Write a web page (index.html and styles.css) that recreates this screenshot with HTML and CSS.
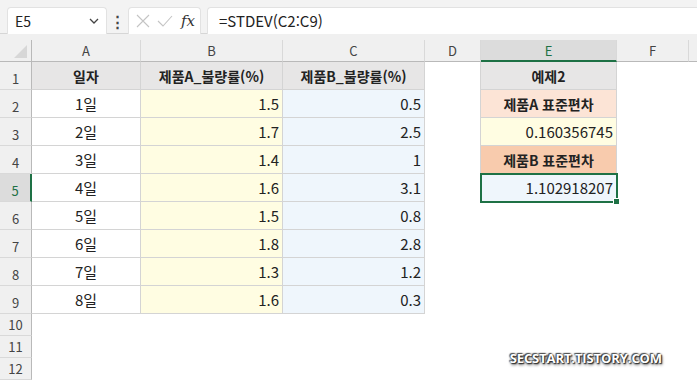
FILE: index.html
```html
<!DOCTYPE html>
<html lang="ko">
<head>
    <meta charset="UTF-8">
    <title>STDEV 예제</title>
    <link rel="stylesheet" href="styles.css">
</head>
<body>

    <!-- 이름 상자 + 수식 입력줄 -->
    <div class="toolbar">
        <div class="name-box">
            <span>E5</span>
            <svg width="10" height="6" viewBox="0 0 10 6"><path d="M1 1 L5 5 L9 1" fill="none" stroke="#444" stroke-width="1.3"/></svg>
        </div>
        <div class="dots">⋮</div>
        <div class="fx-box">
            <svg width="14" height="14" viewBox="0 0 14 14"><path d="M1 1 L13 13 M13 1 L1 13" stroke="#c4c4c4" stroke-width="1.1"/></svg>
            <svg width="16" height="14" viewBox="0 0 16 14"><path d="M1 7 L6 12 L15 2" fill="none" stroke="#c4c4c4" stroke-width="1.1"/></svg>
            <span class="fx">fx</span>
        </div>
        <div class="formula">=STDEV(C2:C9)</div>
    </div>

    <!-- 시트 -->
    <div class="sheet">
        <div class="corner"><svg width="13" height="13" viewBox="0 0 13 13"><path d="M13 0 L13 13 L0 13 Z" fill="#d7d7d7"/></svg></div>
        <div class="ch">A</div>
        <div class="ch">B</div>
        <div class="ch">C</div>
        <div class="ch">D</div>
        <div class="ch sel">E</div>
        <div class="ch">F</div>
        <div class="ch last"></div>

        <div class="rh">1</div>
        <div class="c t head">일자</div>
        <div class="c t head">제품A_불량률(%)</div>
        <div class="c t head">제품B_불량률(%)</div>
        <div class="c"></div>
        <div class="c e head">예제2</div>
        <div class="c"></div><div class="c"></div>

        <div class="rh">2</div>
        <div class="c t mid">1일</div>
        <div class="c t ya num">1.5</div>
        <div class="c t bl num">0.5</div>
        <div class="c"></div>
        <div class="c e peach mid bold">제품A 표준편차</div>
        <div class="c"></div><div class="c"></div>

        <div class="rh">3</div>
        <div class="c t mid">2일</div>
        <div class="c t ya num">1.7</div>
        <div class="c t bl num">2.5</div>
        <div class="c"></div>
        <div class="c e ya num">0.160356745</div>
        <div class="c"></div><div class="c"></div>

        <div class="rh">4</div>
        <div class="c t mid">3일</div>
        <div class="c t ya num">1.4</div>
        <div class="c t bl num">1</div>
        <div class="c"></div>
        <div class="c e orange mid bold">제품B 표준편차</div>
        <div class="c"></div><div class="c"></div>

        <div class="rh sel">5</div>
        <div class="c t mid">4일</div>
        <div class="c t ya num">1.6</div>
        <div class="c t bl num">3.1</div>
        <div class="c"></div>
        <div class="c e bl num active">1.102918207</div>
        <div class="c"></div><div class="c"></div>

        <div class="rh">6</div>
        <div class="c t mid">5일</div>
        <div class="c t ya num">1.5</div>
        <div class="c t bl num">0.8</div>
        <div class="c"></div><div class="c"></div><div class="c"></div><div class="c"></div>

        <div class="rh">7</div>
        <div class="c t mid">6일</div>
        <div class="c t ya num">1.8</div>
        <div class="c t bl num">2.8</div>
        <div class="c"></div><div class="c"></div><div class="c"></div><div class="c"></div>

        <div class="rh">8</div>
        <div class="c t mid">7일</div>
        <div class="c t ya num">1.3</div>
        <div class="c t bl num">1.2</div>
        <div class="c"></div><div class="c"></div><div class="c"></div><div class="c"></div>

        <div class="rh">9</div>
        <div class="c t mid">8일</div>
        <div class="c t ya num">1.6</div>
        <div class="c t bl num">0.3</div>
        <div class="c"></div><div class="c"></div><div class="c"></div><div class="c"></div>

        <div class="rh">10</div>
        <div class="c"></div><div class="c"></div><div class="c"></div><div class="c"></div><div class="c"></div><div class="c"></div><div class="c"></div>
        <div class="rh">11</div>
        <div class="c"></div><div class="c"></div><div class="c"></div><div class="c"></div><div class="c"></div><div class="c"></div><div class="c"></div>
        <div class="rh">12</div>
        <div class="c"></div><div class="c"></div><div class="c"></div><div class="c"></div><div class="c"></div><div class="c"></div><div class="c"></div>

        <!-- 워터마크 -->
        <div class="watermark">SECSTART.TISTORY.COM</div>
    </div>

</body>
</html>
```

FILE: styles.css
```css
body {
    margin: 0;
    width: 697px;
    height: 382px;
    overflow: hidden;
    font-family: "Noto Sans CJK KR", "Noto Sans", sans-serif;
    color: #222;
    background: #fff;
}

/* 상단 수식 입력줄 */
.toolbar {
    display: flex;
    align-items: flex-start;
    height: 34px;
    padding-left: 7px;
    box-sizing: border-box;
    padding-top: 7px;
    background: #f3f3f3;
    border-bottom: 1px solid #d6d6d6;
}

.name-box {
    width: 100px;
    height: 27px;
    box-sizing: border-box;
    background: #fff;
    border: 1px solid #e2e2e2;
    border-bottom: none;
    border-radius: 4px 4px 0 0;
    display: flex;
    align-items: center;
    justify-content: space-between;
    padding: 0 7px 0 7px;
    font-size: 14px;
    color: #222;
}

.dots {
    width: 21px;
    text-align: center;
    font-size: 15px;
    line-height: 27px;
    color: #444;
    font-weight: bold;
}

.fx-box {
    width: 73px;
    height: 27px;
    box-sizing: border-box;
    background: #fff;
    border: 1px solid #e2e2e2;
    border-bottom: none;
    border-radius: 4px 4px 0 0;
    display: flex;
    align-items: center;
    gap: 7px;
    padding-left: 7px;
}

.fx {
    font-family: "DejaVu Serif", serif;
    font-style: italic;
    font-size: 15px;
    color: #333;
    margin-left: 1px;
}

.formula {
    flex: 1;
    margin-left: 6px;
    height: 27px;
    background: #fff;
    border: 1px solid #e2e2e2;
    border-bottom: none;
    border-right: none;
    border-radius: 4px 0 0 0;
    box-sizing: border-box;
    padding-left: 11px;
    font-size: 15px;
    line-height: 25px;
    color: #222;
}

/* 시트 격자 */
.sheet {
    position: relative;
    display: grid;
    grid-template-columns: 32px 109px 142px 142px 56px 136px 72px 8px;
    grid-template-rows: 22px repeat(9, 28px) repeat(3, 22px);
    padding-top: 6px;
    background: #f0f0f0;
}

.corner {
    border-right: 1px solid #b9b9b9;
    border-bottom: 1px solid #b9b9b9;
    display: flex;
    align-items: flex-end;
    justify-content: flex-end;
    padding: 0 4px 3px 0;
}

.ch {
    border-right: 1px solid #d9d9d9;
    border-bottom: 1px solid #b9b9b9;
    text-align: center;
    font-size: 13px;
    line-height: 21px;
    color: #444;
}

.ch.last {
    border-right: none;
}

.ch.sel {
    background: #dcdcdc;
    color: #1e7145;
    border-bottom: 2px solid #1e7145;
}

.rh {
    border-right: 1px solid #b9b9b9;
    border-bottom: 1px solid #d9d9d9;
    display: flex;
    align-items: flex-end;
    justify-content: center;
    padding-bottom: 1px;
    font-size: 13px;
    color: #444;
}

.rh.sel {
    background: #dcdcdc;
    color: #1e7145;
    border-right: 2px solid #1e7145;
}

.c {
    background: #fff;
    font-size: 15px;
    display: flex;
    align-items: center;
    min-width: 0;
}

/* 표 테두리 */
.t, .e {
    border-right: 1px solid #d4d4d4;
    border-bottom: 1px solid #d4d4d4;
}

.e {
    border-left: 1px solid #d4d4d4;
    margin-left: -1px;
}

.head {
    background: #e7e6e6;
    justify-content: center;
    font-weight: bold;
    font-size: 14px;
}

.mid {
    justify-content: center;
}

.bold {
    font-weight: bold;
    font-size: 14px;
}

.num {
    justify-content: flex-end;
    padding-right: 3px;
}

.ya { background: #fffde2; }
.bl { background: #eff6fc; }
.peach { background: #fce4d6; }
.orange { background: #f8cbad; }

/* 선택된 셀 E5 */
.active {
    position: relative;
}

.active::before {
    content: "";
    position: absolute;
    left: -1px;
    top: -1px;
    right: -2px;
    bottom: -2px;
    border: 2px solid #1e7145;
}

.active::after {
    content: "";
    position: absolute;
    right: -4px;
    bottom: -4px;
    width: 5px;
    height: 5px;
    background: #1e7145;
    border: 1px solid #fff;
}

.watermark {
    position: absolute;
    right: 35px;
    bottom: 13px;
    font-family: "Open Sans", sans-serif;
    font-weight: bold;
    font-size: 13px;
    letter-spacing: -0.1px;
    color: #fff;
    text-shadow: 0 0 2px #222, 1px 1px 1px #333, -1px -1px 1px #555, 1px 2px 3px #666;
}
```
